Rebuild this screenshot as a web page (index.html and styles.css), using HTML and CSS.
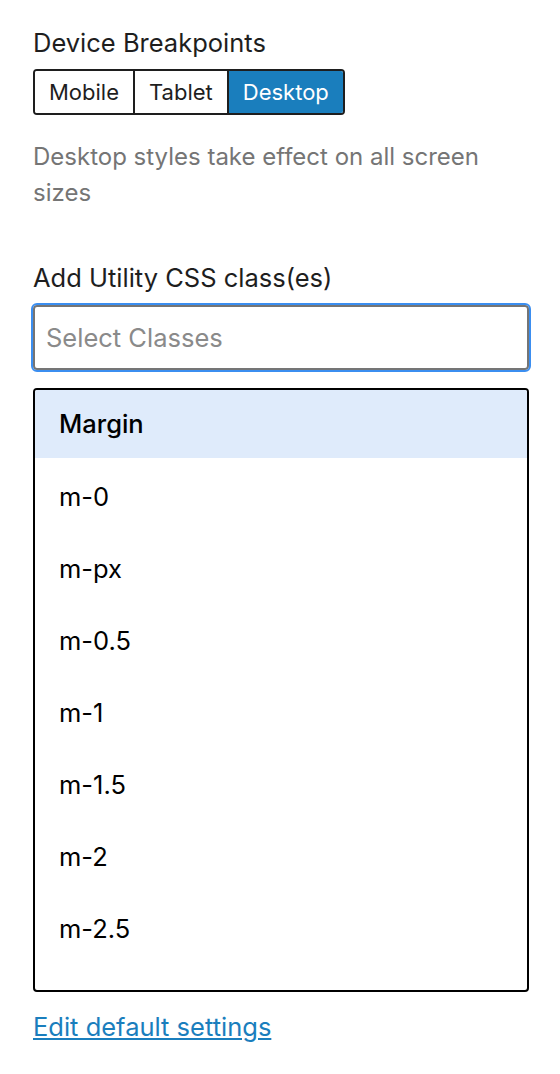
FILE: index.html
```html
<!DOCTYPE html>
<html lang="en">
<head>
    <meta charset="UTF-8">
    <meta name="viewport" content="width=device-width, initial-scale=1.0">
    <title>Utility Classes</title>
    <link rel="stylesheet" href="styles.css">
</head>
<body>

    <div class="panel">
        <div class="field-label">Device Breakpoints</div>
        <div class="breakpoints">
            <button class="breakpoint">Mobile</button>
            <button class="breakpoint">Tablet</button>
            <button class="breakpoint active">Desktop</button>
        </div>
        <p class="help">Desktop styles take effect on all screen sizes</p>

        <div class="field-label">Add Utility CSS class(es)</div>
        <input type="text" class="class-input" placeholder="Select Classes">

        <!-- Class options list -->
        <div class="options">
            <div class="option-group">Margin</div>
            <div class="option">m-0</div>
            <div class="option">m-px</div>
            <div class="option">m-0.5</div>
            <div class="option">m-1</div>
            <div class="option">m-1.5</div>
            <div class="option">m-2</div>
            <div class="option">m-2.5</div>
        </div>

        <a href="#" class="edit-link">Edit default settings</a>
    </div>

</body>
</html>
```

FILE: styles.css
```css
body {
    margin: 0;
    font-family: Inter, 'Noto Sans', sans-serif;
    font-size: 25.5px;
    color: #1e1e1e;
    background: #fff;
}
.panel {
    padding: 27px 31px 0 33px;
}
.field-label {
    line-height: 32px;
    margin-bottom: 10px;
}
.breakpoints {
    display: inline-flex;
    border: 2px solid #1e1e1e;
    border-radius: 4px;
    overflow: hidden;
}
.breakpoint {
    font-family: inherit;
    font-size: 22px;
    color: #1e1e1e;
    background: #fff;
    border: none;
    border-left: 2px solid #1e1e1e;
    height: 42px;
    padding: 0 14px;
    cursor: pointer;
}
.breakpoint:first-child {
    border-left: none;
}
.breakpoint.active {
    background: #1a7ebd;
    color: #fff;
}
.help {
    font-size: 24px;
    color: #757575;
    line-height: 36px;
    margin: 24px 0 51px;
}
.class-input {
    display: block;
    box-sizing: border-box;
    width: 100%;
    height: 65px;
    margin: 11px 0 0;
    padding: 0 11px;
    font-family: inherit;
    font-size: 25.5px;
    border: 2px solid #757575;
    border-radius: 4px;
    outline: 2px solid #3b8ef0;
}
.class-input::placeholder {
    color: #8a8a8a;
}
.options {
    box-sizing: border-box;
    height: 604px;
    margin-top: 18px;
    border: 2px solid #000;
    border-radius: 4px;
    overflow: hidden;
    color: #000;
}
.option-group {
    height: 68px;
    line-height: 68px;
    padding: 0 24px;
    background: #dfebfb;
    font-weight: 500;
    margin-bottom: 3px;
}
.option {
    height: 72px;
    line-height: 72px;
    padding: 0 24px;
}
.edit-link {
    display: inline-block;
    margin-top: 19px;
    color: #1a7ebd;
    line-height: 32px;
}
```
